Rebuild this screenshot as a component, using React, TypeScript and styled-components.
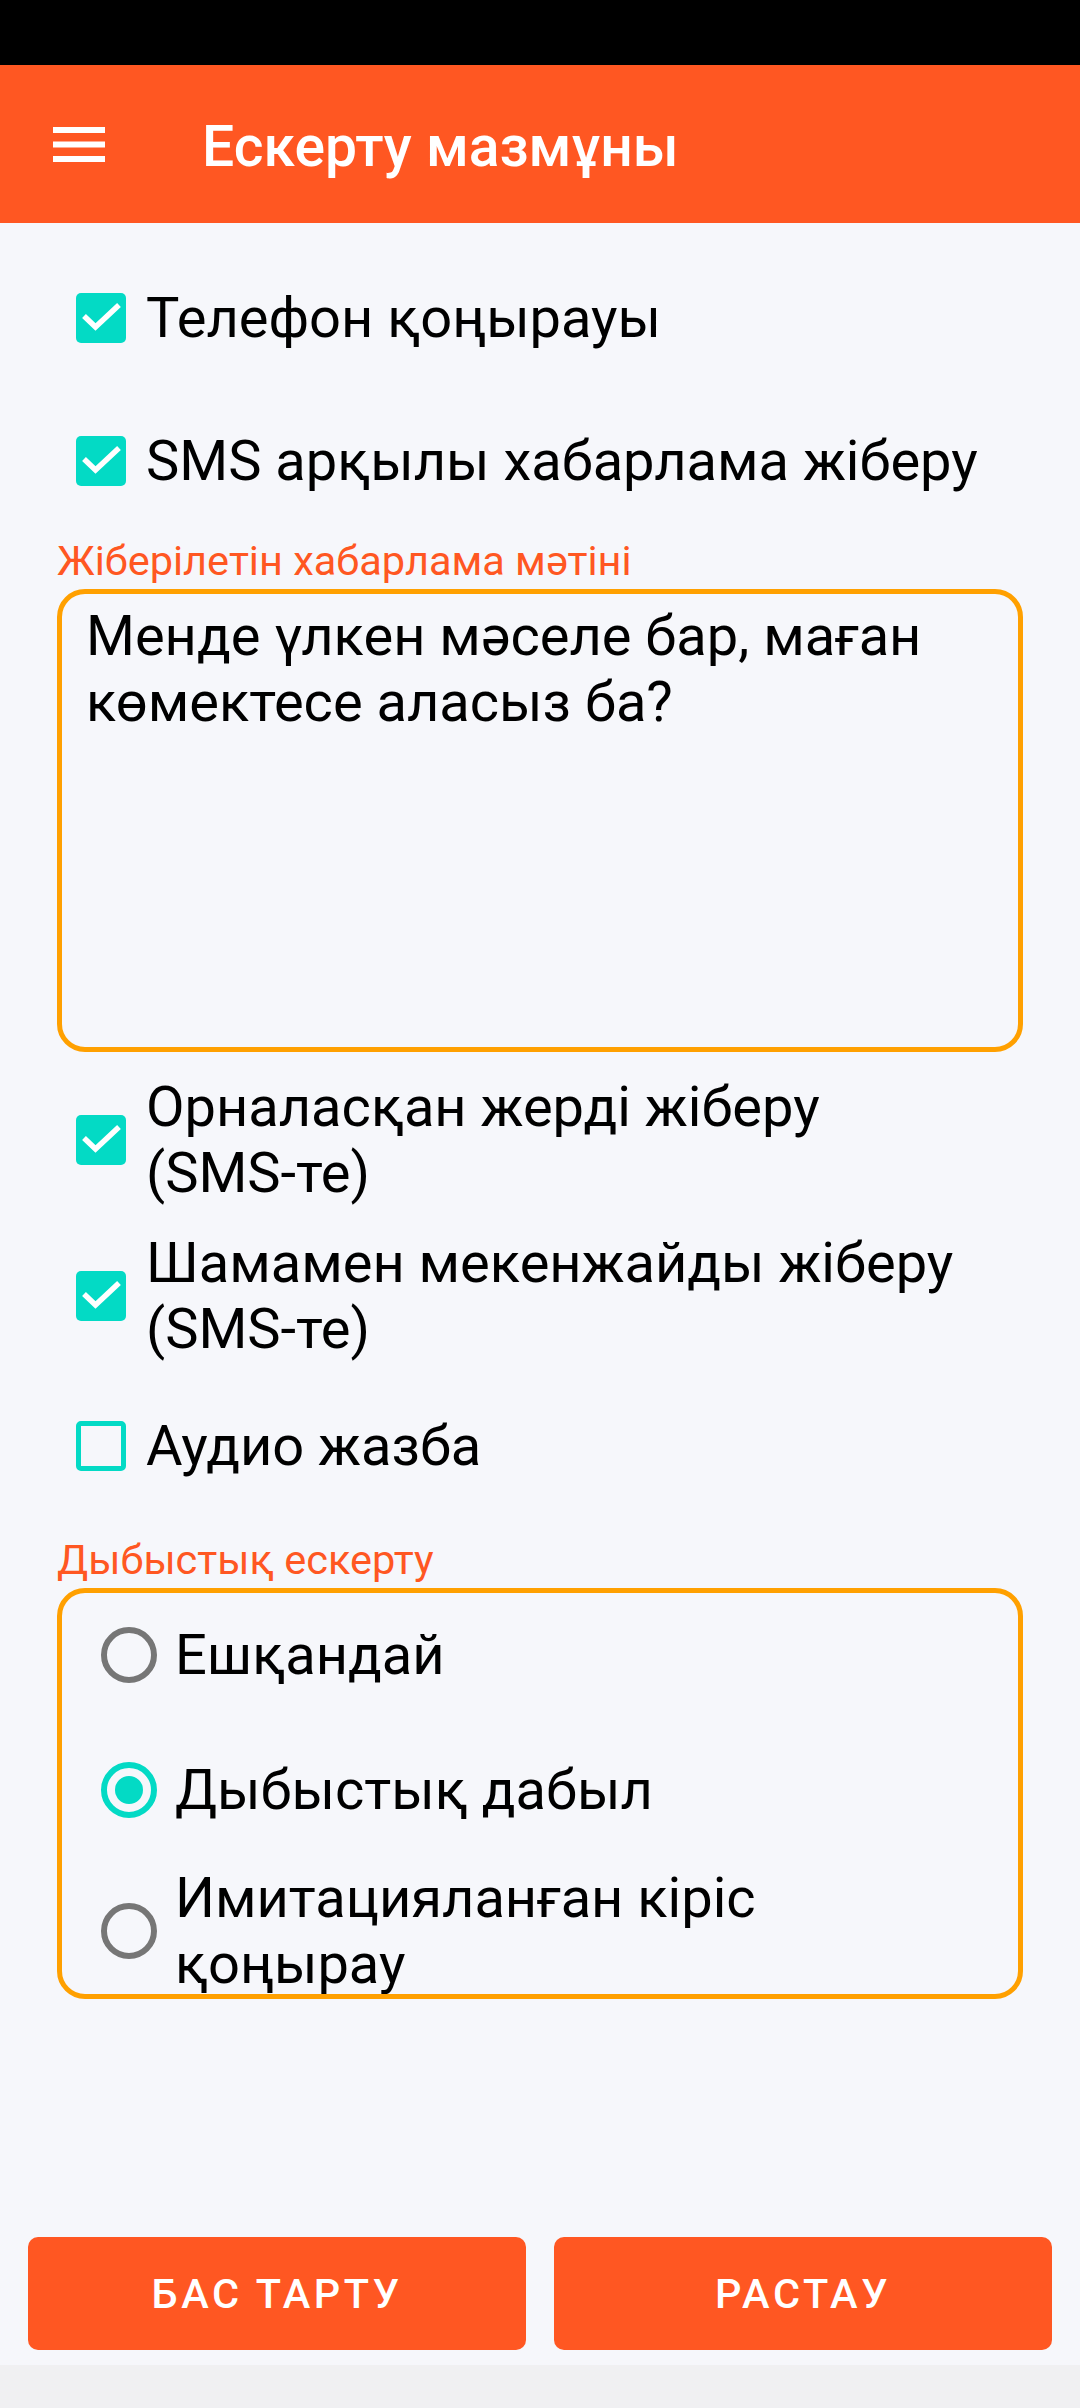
import { FC, ReactNode } from 'react';
import styled, { createGlobalStyle } from 'styled-components';

const ORANGE = '#FF5722';
const AMBER = '#FFA000';
const TEAL = '#03DAC5';

const GlobalStyle = createGlobalStyle`
  html, body {
    margin: 0;
    padding: 0;
    background: #F6F7FB;
    font-family: Roboto, "Noto Sans", sans-serif;
  }
  * {
    box-sizing: border-box;
  }
`;

const Screen = styled.div`
  display: flex;
  flex-direction: column;
  width: 1080px;
  height: 2408px;
  background: #f6f7fb;
`;

const StatusBar = styled.div`
  height: 65px;
  background: #000;
`;

const AppBar = styled.header`
  height: 158px;
  background: ${ORANGE};
  display: flex;
  align-items: center;
  padding-left: 53px;
`;

const Title = styled.h1`
  margin: 4px 0 0 97px;
  font-size: 57px;
  font-weight: 500;
  color: #fff;
`;

const Content = styled.main`
  flex: 1;
  display: flex;
  flex-direction: column;
  padding: 0 57px;
`;

const CheckRow = styled.div<{ $top: number }>`
  display: flex;
  align-items: center;
  min-height: 132px;
  margin-top: ${(p) => p.$top}px;
  padding-left: 19px;
`;

const Box = styled.span<{ $checked: boolean }>`
  flex: none;
  width: 50px;
  height: 50px;
  border-radius: 5px;
  background: ${(p) => (p.$checked ? TEAL : 'transparent')};
  border: ${(p) => (p.$checked ? 'none' : `5px solid ${TEAL}`)};
  display: flex;
  align-items: center;
  justify-content: center;
`;

const OptionText = styled.span`
  font-size: 56px;
  line-height: 66px;
  color: #000;
`;

const CheckText = styled(OptionText)`
  margin-left: 20px;
`;

const NoWrap = styled.span`
  white-space: nowrap;
`;

const SectionLabel = styled.div<{ $top: number }>`
  margin-top: ${(p) => p.$top}px;
  font-size: 41.5px;
  line-height: 45px;
  color: ${ORANGE};
`;

const Framed = styled.div`
  margin-top: 6px;
  border: 5px solid ${AMBER};
  border-radius: 28px;
`;

const MessageBox = styled(Framed)`
  height: 463px;
  padding: 9px 24px;
  font-size: 56px;
  line-height: 66px;
  color: #000;
`;

const RadioGroup = styled(Framed)`
  height: 411px;
  overflow: hidden;
  padding: 0 50px 0 39px;
`;

const RadioRow = styled.div<{ $top: number }>`
  display: flex;
  align-items: center;
  min-height: 132px;
  margin-top: ${(p) => p.$top}px;
`;

const RadioCircle = styled.span<{ $selected: boolean }>`
  flex: none;
  width: 56px;
  height: 56px;
  border-radius: 50%;
  border: 6px solid ${(p) => (p.$selected ? TEAL : '#767676')};
  display: flex;
  align-items: center;
  justify-content: center;
  &::after {
    content: '';
    display: ${(p) => (p.$selected ? 'block' : 'none')};
    width: 28px;
    height: 28px;
    border-radius: 50%;
    background: ${TEAL};
  }
`;

const RadioText = styled(OptionText)`
  margin-left: 18px;
`;

const ButtonBar = styled.div`
  display: grid;
  grid-template-columns: 1fr 1fr;
  gap: 28px;
  padding: 0 28px;
  margin-bottom: 15px;
`;

const ActionButton = styled.button`
  height: 113px;
  border: none;
  border-radius: 10px;
  background: ${ORANGE};
  color: #fff;
  font-family: Roboto, sans-serif;
  font-size: 41.5px;
  font-weight: 500;
  letter-spacing: 3.6px;
  text-transform: uppercase;
`;

const NavArea = styled.div`
  height: 43px;
  background: #f0f0f2;
`;

const MenuIcon: FC = () => (
  <svg width="52" height="35" viewBox="0 0 52 35" fill="#fff">
    <rect x="0" y="0" width="52" height="6" />
    <rect x="0" y="14.5" width="52" height="6" />
    <rect x="0" y="29" width="52" height="6" />
  </svg>
);

const CheckMark: FC = () => (
  <svg width="50" height="50" viewBox="0 0 50 50" fill="none">
    <path d="M8 23L19.5 34L43 12" stroke="#fff" strokeWidth="5.5" />
  </svg>
);

const Check: FC<{ checked: boolean; top: number; children: ReactNode }> = ({
  checked,
  top,
  children,
}) => (
  <CheckRow $top={top}>
    <Box $checked={checked}>{checked && <CheckMark />}</Box>
    <CheckText>{children}</CheckText>
  </CheckRow>
);

const Radio: FC<{ selected?: boolean; top: number; children: ReactNode }> = ({
  selected = false,
  top,
  children,
}) => (
  <RadioRow $top={top}>
    <RadioCircle $selected={selected} />
    <RadioText>{children}</RadioText>
  </RadioRow>
);

export default function App() {
  return (
    <>
      <GlobalStyle />
      <Screen>
        <StatusBar />
        <AppBar>
          <MenuIcon />
          <Title>Ескерту мазмұны</Title>
        </AppBar>
        <Content>
          <Check checked top={29}>
            Телефон қоңырауы
          </Check>
          <Check checked top={11}>
            SMS арқылы хабарлама жіберу
          </Check>
          <SectionLabel $top={11}>Жіберілетін хабарлама мәтіні</SectionLabel>
          <MessageBox>Менде үлкен мәселе бар, маған көмектесе аласыз ба?</MessageBox>
          <Check checked top={22}>
            Орналасқан жерді жіберу <NoWrap>(SMS-те)</NoWrap>
          </Check>
          <Check checked top={24}>
            Шамамен мекенжайды жіберу <NoWrap>(SMS-те)</NoWrap>
          </Check>
          <Check checked={false} top={18}>
            Аудио жазба
          </Check>
          <SectionLabel $top={25}>Дыбыстық ескерту</SectionLabel>
          <RadioGroup>
            <Radio top={-4}>Ешқандай</Radio>
            <Radio selected top={3}>
              Дыбыстық дабыл
            </Radio>
            <Radio top={9}>Имитацияланған кіріс қоңырау</Radio>
          </RadioGroup>
        </Content>
        <ButtonBar>
          <ActionButton>Бас тарту</ActionButton>
          <ActionButton>Растау</ActionButton>
        </ButtonBar>
        <NavArea />
      </Screen>
    </>
  );
}
